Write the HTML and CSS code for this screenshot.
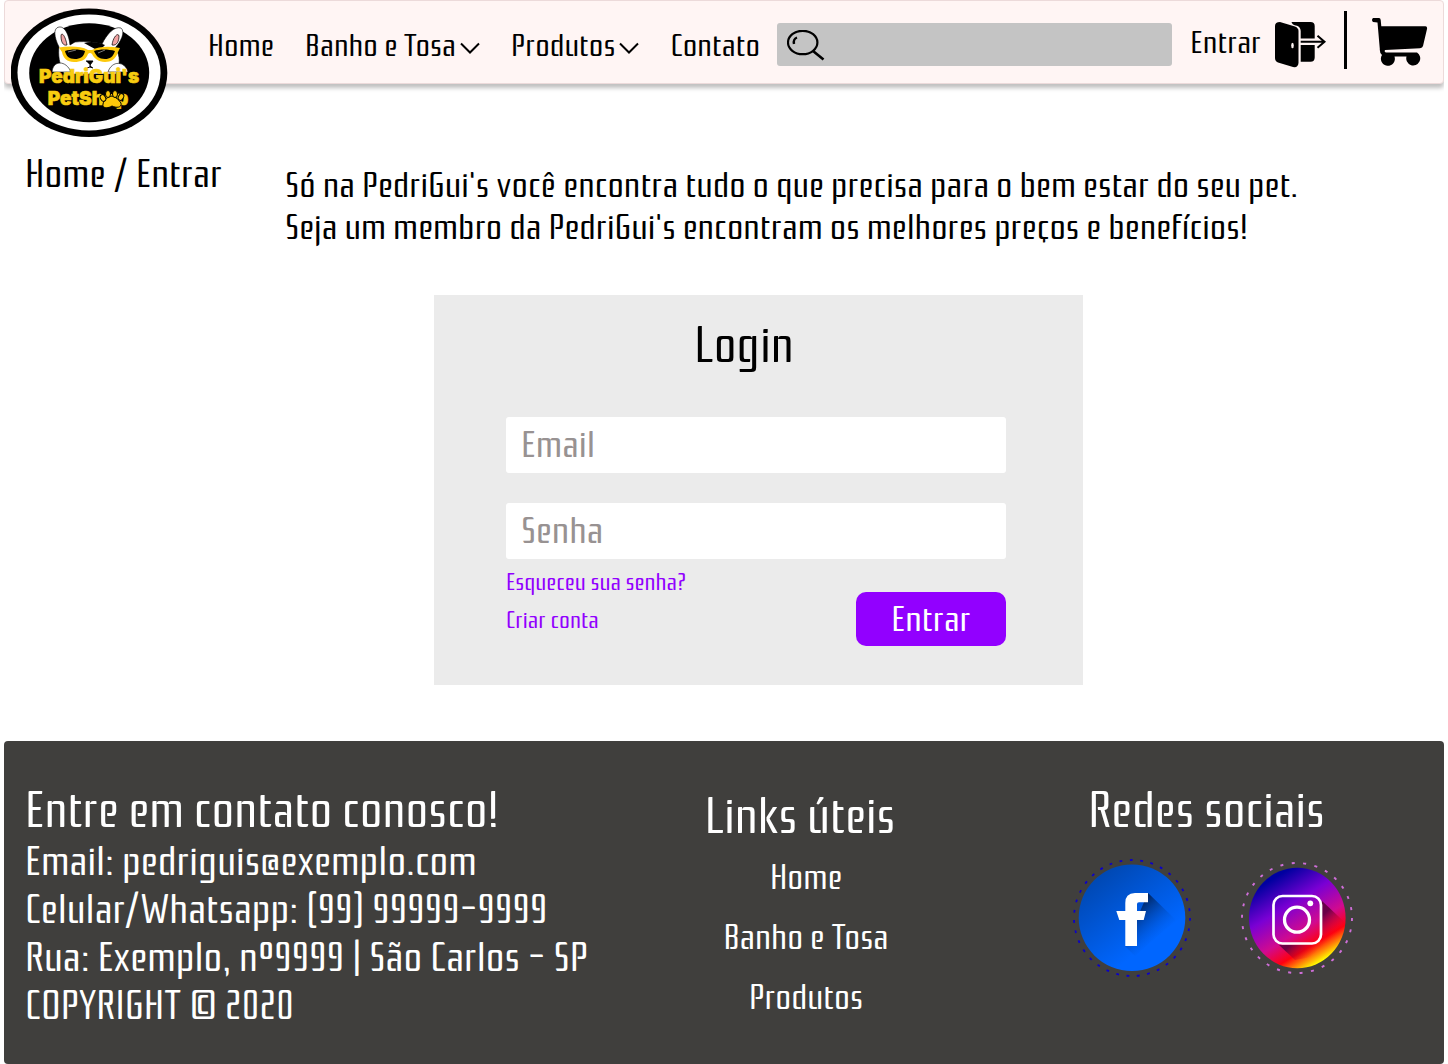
FILE: index.html
```html
<!DOCTYPE html>
<html lang="pt-BR">
<head>
<meta charset="utf-8">
<meta name="viewport" content="width=device-width, initial-scale=1">
<title>PedriGui's PetShop - Entrar</title>
<link rel="stylesheet" href="styles.css">
</head>
<body>
<header class="topbar">
  <a class="logo" href="#" aria-label="PedriGui's PetShop">
    <svg width="157" height="130" viewBox="0 0 157 130">
      <ellipse cx="78" cy="64.700" rx="78.300" ry="64.300"/>
      <ellipse cx="78" cy="64.500" rx="71.500" ry="58" fill="#fff"/>
      <ellipse cx="78.200" cy="64.700" rx="60" ry="49.500"/>
      <g fill="#fff" stroke="#000" stroke-width=".6">
        <path d="M48 39C43 29 42 20 48 19C54 18 58 27 59 37L64 34C76 33 84 34 91 36C96 26 103 18 110 20C115 24 109 35 104 40C110 48 109 57 105 66H53C48 56 47 46 48 39Z"/>
        <path d="M41 64C42 52 55 52 60 64ZM97 64C101 52 114 53 117 64Z"/>
      </g>
      <path d="M50 28C50 24 54 26 56 37C52 38 50 34 50 28ZM108 28C107 24 102 29 101 37C106 38 108 33 108 28Z" fill="#f1a3a3" stroke="#000" stroke-width=".7"/>
      <path d="M73 35C80 33 87 34 94 37L90 41H84Z"/>
      <path d="M48 39.500C58 38 70 38 77 42H81C88 38 99 38 109 40L107 44C105 51 100 54 94 54C87 54 83 50 81 46Q79 44 77 46C75 52 70 54 63 54C56 54 52 50 51 44Z" fill="#fdc90a"/>
      <path d="M54 43C60 41 68 41 74 43C73 49 69 51 64 51C58 51 55 48 54 43ZM83 43C89 41 97 41 104 43C102 49 99 51 94 51C88 51 85 48 83 43Z"/>
      <path d="M57 44L65 42M87 45L94 42" stroke="#777" stroke-width="1"/>
      <path d="M75 53H82L79 57V59L82 60M79 59L76 60" stroke="#000"/>
      <text class="logo-name" x="78" y="75" text-anchor="middle">PedriGui's</text>
      <text class="logo-name" x="77" y="97" text-anchor="middle">PetShop</text>
      <g fill="#fdc90a" stroke="#000" stroke-width="1">
        <path d="M92 96C93 91 97 89 101 88C105 89 108 92 110 95C111 100 105 100 101 98C96 101 91 100 92 96Z"/>
        <ellipse cx="92" cy="90" rx="2.500" ry="3.500" transform="rotate(-30 92 90)"/>
        <ellipse cx="97" cy="86" rx="2.500" ry="3.500"/>
        <ellipse cx="104" cy="86" rx="2.500" ry="3.500"/>
        <ellipse cx="110" cy="89" rx="2.500" ry="3.500" transform="rotate(30 110 89)"/>
      </g>
    </svg>
  </a>
  <nav class="menu">
    <a href="#">Home</a>
    <a href="#">Banho e Tosa <svg width="20" height="12" viewBox="0 0 20 12"><path d="M1 1.500L10 10.500L19 1.500" fill="none" stroke="#000" stroke-width="2"/></svg></a>
    <a href="#">Produtos <svg width="20" height="12" viewBox="0 0 20 12"><path d="M1 1.500L10 10.500L19 1.500" fill="none" stroke="#000" stroke-width="2"/></svg></a>
    <a href="#">Contato</a>
  </nav>
  <label class="search">
    <svg width="38" height="31" viewBox="0 0 38 31" fill="none" stroke="#000" stroke-width="2.200">
      <ellipse cx="15.700" cy="12.500" rx="14.700" ry="11.700"/>
      <path d="M26 21L36.500 29.500" stroke-width="2.600"/>
      <path d="M7 14Q6 9 10 7.500" stroke-width="2.400"/>
    </svg>
    <input type="search" aria-label="Buscar">
  </label>
  <a class="signin" href="#">Entrar
    <svg width="52" height="46" viewBox="0 0 52 46">
      <path d="M0 4Q0 0 5 0L20 4.500Q23.500 6 23.500 9V41Q23 46 18 45L3 40.500Q0 39 0 36Z"/>
      <path d="M16.500 0H35.500Q39.700 0 39.700 4V16.500H25.700V9Q25.500 5 22 3.800Q17 3 16.500 0ZM25.700 23H39.700V35.500Q39.700 39.700 35.500 39.700H25.700Z"/>
      <path d="M25.700 19.700H49M42.500 13.700L49.500 19.700L42.500 25.700" fill="none" stroke="#000" stroke-width="2"/>
      <ellipse cx="17.500" cy="23.500" rx="1.300" ry="2.700" fill="#fff5f4"/>
    </svg>
  </a>
  <span class="divider"></span>
  <a class="cart" href="#" aria-label="Carrinho">
    <svg width="56" height="48" viewBox="0 0 56 48">
      <path d="M1 0H7Q8.500 0 8.700 2L9.300 8.300H53.500Q55.500 8.500 55 11L51 28Q50.500 30 48 30.200L13 32Q12 34.300 14 34.500H45A7 7 0 1 1 34.500 38.500H22.500A7 7 0 1 1 10 37Q7.500 35 7.800 31L5.500 4.500L1 4Q-1 2 1 0Z"/>
    </svg>
  </a>
</header>

<main class="page">
  <div class="intro-row">
    <nav class="crumbs" aria-label="Trilha"><a href="#">Home</a> / Entrar</nav>
    <p class="intro">Só na PedriGui's você encontra tudo o que precisa para o bem estar do seu pet.<br>Seja um membro da PedriGui's encontram os melhores preços e benefícios!</p>
  </div>
  <div class="login-wrap">
    <form class="login">
      <h1>Login</h1>
      <input class="field" type="email" placeholder="Email" aria-label="Email">
      <input class="field" type="password" placeholder="Senha" aria-label="Senha">
      <div class="actions">
        <div class="help">
          <a href="#">Esqueceu sua senha?</a>
          <a href="#">Criar conta</a>
        </div>
        <button type="submit">Entrar</button>
      </div>
    </form>
  </div>
</main>

<footer class="footer">
  <section class="contact">
    <h2>Entre em contato conosco!</h2>
    <p>Email: pedriguis@exemplo.com</p>
    <p>Celular/Whatsapp: (99) 99999-9999</p>
    <p>Rua: Exemplo, nº9999 | São Carlos - SP</p>
    <p>COPYRIGHT © 2020</p>
  </section>
  <section class="links">
    <h2>Links úteis</h2>
    <a href="#">Home</a>
    <a href="#">Banho e Tosa</a>
    <a href="#">Produtos</a>
  </section>
  <section class="social">
    <h2>Redes sociais</h2>
    <div class="icons">
      <a href="#" aria-label="Facebook">
        <svg width="118" height="118" viewBox="0 0 118 118">
          <defs>
            <linearGradient id="fb" x1=".15" y1=".1" x2=".65" y2=".75"><stop offset="0" stop-color="#0047b0"/><stop offset="1" stop-color="#0066ff"/></linearGradient>
            <linearGradient id="fbs" gradientUnits="userSpaceOnUse" x1="62" y1="48" x2="90" y2="78"><stop offset="0" stop-color="#002560"/><stop offset="1" stop-color="#0062f5" stop-opacity="0"/></linearGradient>
          </defs>
          <circle cx="59" cy="59" r="58" fill="none" stroke="#0b00c8" stroke-width="1.800" stroke-dasharray="2.800 7.612"/>
          <circle cx="59" cy="58.700" r="53.300" fill="url(#fb)"/>
          <path d="M75 34L103 61L62 97L52 87Z" fill="url(#fbs)"/>
          <path d="M75 34V43.300H66Q64 43.300 64 45V52H73L70.700 61H64V87H52.300V61H46.300L43.300 52H52.300V44Q52 34.500 62 34Z" fill="#fff"/>
        </svg>
      </a>
      <a href="#" aria-label="Instagram">
        <svg width="112" height="112" viewBox="0 0 112 112">
          <defs>
            <linearGradient id="ig" gradientUnits="userSpaceOnUse" x1="25" y1="15" x2="78" y2="103"><stop offset=".05" stop-color="#0000a0"/><stop offset=".35" stop-color="#7a00d4"/><stop offset=".62" stop-color="#d00a90"/><stop offset=".8" stop-color="#ff0010"/><stop offset=".98" stop-color="#ffff00"/></linearGradient>
            <linearGradient id="igs" gradientUnits="userSpaceOnUse" x1="60" y1="60" x2="82" y2="84"><stop offset=".3" stop-color="#600040" stop-opacity=".9"/><stop offset="1" stop-color="#ff0010" stop-opacity="0"/></linearGradient>
          </defs>
          <circle cx="56" cy="56" r="55" fill="none" stroke="#cf6fd8" stroke-width="1.900" stroke-dasharray="3 8.519"/>
          <ellipse cx="56.300" cy="56" rx="48.300" ry="50.300" fill="url(#ig)"/>
          <path d="M81 39L104.500 61L87 92L54 98L38 83H76Q81 83 81 76Z" fill="url(#igs)"/>
          <rect x="32.500" y="34" width="47.500" height="47.500" rx="9" fill="none" stroke="#fff" stroke-width="2.700"/>
          <circle cx="56" cy="57.700" r="12.500" fill="none" stroke="#fff" stroke-width="3.300"/>
          <circle cx="69.300" cy="41.300" r="2.900" fill="#fff"/>
        </svg>
      </a>
    </div>
  </section>
</footer>
</body>
</html>
```
FILE: styles.css
```css
* { box-sizing: border-box; }

body {
  margin: 0 4px;
  background: #fff;
  color: #000;
  font-family: "Rationale", "Liberation Sans Narrow", "Roboto Condensed", "Liberation Sans", sans-serif;
}

a { color: inherit; text-decoration: none; }
h1, h2, p { margin: 0; font-weight: 400; }
svg { display: block; flex: none; }

.topbar {
  position: relative;
  display: flex;
  align-items: center;
  min-height: 84px;
  padding: 0 15px 0 203px;
  background: #fff5f4;
  border: 1px solid #ecdada;
  border-radius: 4px;
  box-shadow: 0 4px 4px rgba(0, 0, 0, .25);
  font-size: 32px;
}
.logo { position: absolute; left: 6px; top: 7px; }
.logo-name {
  font: 900 19px Inter, "Liberation Sans", sans-serif;
  fill: #f8cc10;
  stroke: #f8cc10;
  stroke-width: .6px;
}

.menu { display: flex; gap: 31px; padding-top: 6px; white-space: nowrap; }
.menu a { display: flex; align-items: center; gap: 4px; }
.menu svg { margin-top: 5px; }

.search {
  flex: 1;
  display: flex;
  align-items: center;
  gap: 8px;
  height: 43px;
  margin: 4px 18px 0 17px;
  padding: 2px 10px 0;
  background: #c4c4c4;
  border-radius: 3px;
}
.search input {
  flex: 1;
  min-width: 0;
  border: 0;
  outline: 0;
  background: transparent;
  font: inherit;
}
.signin { display: flex; align-items: center; gap: 14px; }
.signin svg { margin-top: 6px; }
.divider { width: 3px; height: 58px; margin: 0 25px 4px 17px; background: #000; }

.page { padding: 66px 21px 56px; }
.intro-row { display: flex; align-items: flex-start; }
.crumbs { flex: none; width: 260px; font-size: 39px; line-height: 50px; }
.intro { padding-top: 14px; font-size: 36px; line-height: 42px; }

.login-wrap { padding: 47px 0 0 69px; }
.login {
  display: flex;
  flex-direction: column;
  max-width: 649px;
  margin: 0 auto;
  padding: 23px 77px 39px 72px;
  background: #ebebeb;
}
.login h1 {
  padding: 0 24px 43px 0;
  font-size: 50px;
  line-height: 56px;
  text-align: center;
}
.field {
  width: 100%;
  height: 56px;
  padding: 0 15px;
  border: 0;
  border-radius: 3px;
  background: #fff;
  font: inherit;
  font-size: 38px;
}
.field + .field { margin-top: 30px; }
.field::placeholder { color: #989292; opacity: 1; }
.actions {
  display: flex;
  justify-content: space-between;
  align-items: flex-end;
  padding-top: 4px;
}
.help {
  display: flex;
  flex-direction: column;
  align-self: flex-start;
  color: #9200ff;
  font-size: 24px;
  line-height: 38px;
}
.login button {
  width: 150px;
  height: 54px;
  margin-top: 29px;
  border: 0;
  border-radius: 10px;
  background: #9200ff;
  color: #fff;
  font: inherit;
  font-size: 36px;
}

.footer {
  display: grid;
  grid-template-columns: 610fr 342fr 467fr;
  padding: 43px 0 34px 21px;
  background: #403f3d;
  border-radius: 4px;
  color: #fff;
}
.footer h2 { font-size: 50px; line-height: 54px; }
.contact { font-size: 41px; line-height: 48px; white-space: nowrap; }
.links {
  display: flex;
  flex-direction: column;
  align-items: center;
  padding-top: 6px;
  font-size: 35px;
  line-height: 60px;
}
.links h2 { padding: 0 12px 4px 0; }
.social { display: flex; flex-direction: column; align-items: center; }
.social h2 { padding-right: 8px; }
.icons { display: flex; align-items: center; gap: 50px; padding: 21px 0 0 4px; }
```
